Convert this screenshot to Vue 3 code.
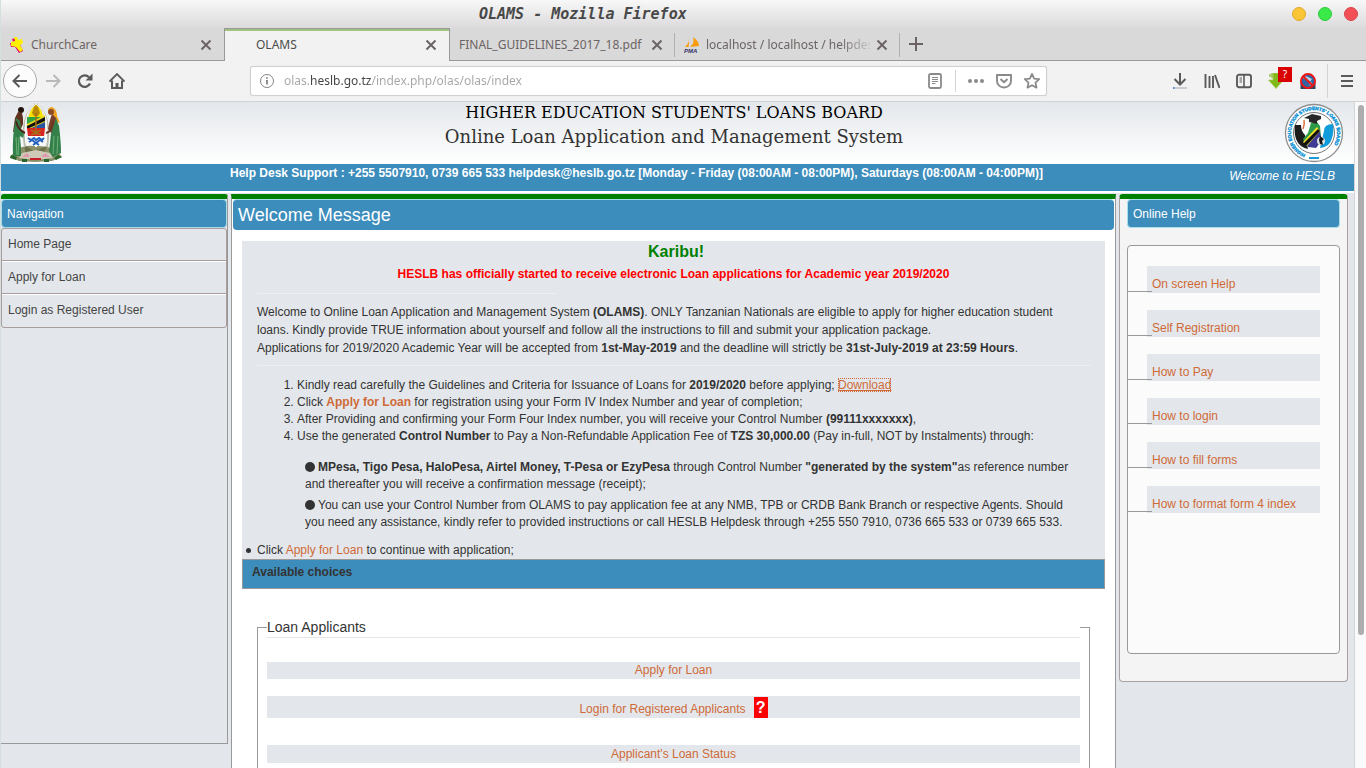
<script setup>
const navItems = ['Home Page', 'Apply for Loan', 'Login as Registered User']
const helpItems = ['On screen Help', 'Self Registration', 'How to Pay', 'How to login', 'How to fill forms', 'How to format form 4 index']
const address = 'olas.heslb.go.tz/index.php/olas/olas/index'
</script>

<template>
  <div class="window">
    <header class="titlebar">
      <span class="window-title">OLAMS - Mozilla Firefox</span>
      <div class="window-buttons">
        <button class="dot amber" aria-label="Minimise"></button>
        <button class="dot green" aria-label="Maximise"></button>
        <button class="dot red" aria-label="Close window"></button>
      </div>
    </header>

    <div class="tabs">
      <div class="tab first">
        <svg class="favicon" viewBox="0 0 16 16" aria-hidden="true">
          <path d="M3 2l4-1 1 5 3 1 3 7-4 2-4-6-4 0-1-4 3-1z" fill="#e5006d" />
          <path d="M5 0h3l1 3 4-1 1 4-3 2 3 5-3 2-4-5-5-1 0-4 4-1z" fill="#fff200" />
        </svg>
        <button class="tab-label">ChurchCare</button>
        <button class="tab-close" aria-label="Close ChurchCare"><svg viewBox="0 0 12 12"><path d="M1.5 1.5l9 9M10.5 1.5l-9 9" /></svg></button>
      </div>
      <div class="tab active">
        <span class="favicon"></span>
        <button class="tab-label">OLAMS</button>
        <button class="tab-close" aria-label="Close OLAMS"><svg viewBox="0 0 12 12"><path d="M1.5 1.5l9 9M10.5 1.5l-9 9" /></svg></button>
      </div>
      <div class="tab divided">
        <button class="tab-label">FINAL_GUIDELINES_2017_18.pdf</button>
        <button class="tab-close" aria-label="Close PDF"><svg viewBox="0 0 12 12"><path d="M1.5 1.5l9 9M10.5 1.5l-9 9" /></svg></button>
      </div>
      <div class="tab divided">
        <svg class="favicon" viewBox="0 0 16 16" aria-hidden="true">
          <path d="M5 1Q5 7 1 10h4zM6 10Q11 6 9 0q6 4 6 9z" fill="#f89c0e" />
          <path d="M5 10q1-3 0-8" stroke="#d9d9d9" fill="none" />
          <text x="0" y="16" font-family="Liberation Sans" font-size="6" font-weight="bold" font-style="italic" fill="#333366">PMA</text>
        </svg>
        <button class="tab-label fade">localhost / localhost / helpdes</button>
        <button class="tab-close" aria-label="Close localhost"><svg viewBox="0 0 12 12"><path d="M1.5 1.5l9 9M10.5 1.5l-9 9" /></svg></button>
      </div>
      <button class="new-tab" aria-label="New tab"><svg viewBox="0 0 14 14"><path d="M7 0v14M0 7h14" /></svg></button>
    </div>

    <div class="toolbar">
      <button class="tool back" aria-label="Back"><svg viewBox="0 0 16 16"><path d="M15 8H1.5M7.500 2L1.500 8l6 6" /></svg></button>
      <button class="tool pale" aria-label="Forward"><svg viewBox="0 0 16 16"><path d="M1 8h13.500M8.500 2l6 6-6 6" /></svg></button>
      <button class="tool" aria-label="Reload"><svg viewBox="0 0 16 16"><path d="M13 10.500A5.800 5.800 0 1 1 12 4.200" stroke-width="2.200" /><path d="M15.500 0.500v7h-7z" fill="#5a5a5a" stroke="none" /></svg></button>
      <button class="tool" aria-label="Home"><svg viewBox="0 0 16 16"><path d="M0.500 8.500L8 1l7.500 7.500" stroke-width="1.800" /><path d="M3 7.500V15h10V7.500" /><path d="M6.500 15v-5h3v5z" fill="#5a5a5a" stroke="none" /></svg></button>

      <div class="urlbar">
        <svg class="info" viewBox="0 0 16 16"><circle cx="8" cy="8" r="6.500" /><path d="M8 7v4.500M8 4.300v1.500" stroke-width="1.800" /></svg>
        <input class="address" type="text" aria-label="Address" :value="address" spellcheck="false" />
        <button class="url-btn" aria-label="Reader view"><svg viewBox="0 0 16 16"><rect x="2" y="1" width="12" height="14" rx="1.500" stroke-width="1.800" /><path d="M5 4.500h6M5 6.500h6M5 8.500h6M5 10.500h3.500" stroke-width="1" /></svg></button>
        <span class="url-sep"></span>
        <button class="url-btn" aria-label="Page actions"><svg viewBox="0 0 16 16"><g fill="#8a8a8a" stroke="none"><circle cx="2" cy="8" r="2" /><circle cx="8" cy="8" r="2" /><circle cx="14" cy="8" r="2" /></g></svg></button>
        <button class="url-btn" aria-label="Pocket"><svg viewBox="0 0 16 16"><path d="M1 2h14v6a7 6.500 0 0 1-14 0zM4.500 6L8 9.300 11.500 6" stroke-width="1.900" stroke-linejoin="round" /></svg></button>
        <button class="url-btn" aria-label="Bookmark"><svg viewBox="0 0 16 16"><path d="M8 1l2.200 4.600 5 .6-3.700 3.400 1 5L8 12.200l-4.500 2.400 1-5L.8 6.200l5-.6z" stroke-width="1.800" stroke-linejoin="round" /></svg></button>
      </div>

      <button class="tool" aria-label="Downloads"><svg viewBox="0 0 16 16"><path d="M8 0v11M2.500 6L8 11.500 13.500 6" /><path d="M1 15h14" stroke="#c9ccd0" /><path d="M1 15h1.500" stroke="#4a90d9" /></svg></button>
      <button class="tool" aria-label="Library"><svg viewBox="0 0 16 16"><path d="M1.500 1v14M5.500 3v12M9 3v12M11 2l4.500 13" stroke-width="1.900" /></svg></button>
      <button class="tool" aria-label="Sidebars"><svg viewBox="0 0 16 16"><rect x="1" y="1.800" width="14" height="12.400" rx="2" stroke-width="1.900" /><path d="M8 2v12" stroke-width="1.600" /><path d="M3.500 5H6M3.500 7H6M3.500 9H6" stroke-width="1" /></svg></button>
      <button class="tool badge-tool" aria-label="Download helper">
        <svg viewBox="0 0 16 16"><path d="M5 0h6v7h4.500L8 15.500 0.500 7H5z" fill="#83b81a" stroke="#a5cf55" stroke-width=".8" /><path d="M2 1v3M4 0v5" stroke="#83b81a" stroke-width="1.200" /></svg>
        <span class="badge">?</span>
      </button>
      <button class="tool" aria-label="Proxy off"><svg viewBox="0 0 16 16"><rect x="0.500" y="8" width="15" height="8" fill="#33445e" stroke="none" /><circle cx="8" cy="8" r="6.500" fill="#2f66a3" stroke="none" /><path d="M3 5q3-3 5-1l4 2-2 3zM9 10l3-1-2 4z" fill="#b4cfe4" stroke="none" /><circle cx="8" cy="8" r="7" stroke="#f01414" stroke-width="1.900" /><path d="M3 3l10 10" stroke="#f01414" stroke-width="1.900" /></svg></button>
      <span class="tool-sep"></span>
      <button class="tool" aria-label="Menu"><svg viewBox="0 0 16 16"><path d="M2 3h12M2 8h12M2 13h12" /></svg></button>
    </div>

    <div class="viewport">
      <div class="page">
        <div class="masthead">
          <svg class="arms" viewBox="0 0 56 60" role="img" aria-label="Coat of arms of Tanzania">
            <path d="M7 48q7-6 20-5 15-1 23 6l4 5-10 4-17 1-16-1-9-4z" fill="#8b9068" />
            <path d="M16 42l10 6 13-5-6 13H19z" fill="#6b704a" />
            <path d="M14 50l14-3 14 3 3 5-17 2-17-2z" fill="#cfc9ba" />
            <path d="M14 54l5-4 3 4zM33 54l4-4 5 4z" fill="#dd9aaa" />
            <path d="M22 55h11v2H22z" fill="#c81e2a" />
            <path d="M3 52l6 2-1 3-6-2zM50 52l4 2-6 3-2-2zM14 56h5v3h-5zM36 56h5v3h-5z" fill="#28662b" />
            <path d="M17 44Q12 14 27 1M39 44Q44 14 29 1" fill="none" stroke="#bcbcaa" stroke-width="2" />
            <path d="M18 40Q14 12 26 1M38 40Q42 12 30 1" fill="none" stroke="#fff" stroke-width="1" />
            <path d="M28 1q-9 6-9 24 1 13 9 19 8-6 9-19 0-18-9-24z" fill="#f8e000" stroke="#e8e8d8" />
            <path d="M26 4l2-2 2 2 2 6-2 3h-4l-2-3z" fill="#bb8909" />
            <path d="M19 14h18v11H19z" fill="#2856a5" />
            <path d="M19 14h18L19 24z" fill="#2ea343" />
            <path d="M19 21l18-9v7l-18 8z" fill="#e9d51f" />
            <path d="M19 23l18-9v4l-18 8z" fill="#101010" />
            <path d="M19 25h18l-1 8H20z" fill="#da2424" />
            <path d="M23 32l10-5M33 32L23 27M28 10v22" stroke="#a56f18" stroke-width="1.500" />
            <path d="M20 33h16q-2 8-8 11-6-3-8-11z" fill="#fff" />
            <path d="M20 35l3 2 3-2 2 2 3-2 3 2 2-2M21 39l3-2 4 3 4-3 3 2M25 42l3-2 3 2" fill="none" stroke="#2463bd" stroke-width="2" />
            <path d="M10 9l4 1 1 5 0 6-3 7-7 1 2-14z" fill="#5f311f" />
            <circle cx="13" cy="7" r="3" fill="#24130d" />
            <path d="M8 15l4 3 1 8 3 5-1 4-3-2 1 12 0 8H5Q4 32 8 15z" fill="#34804b" />
            <path d="M8 18q2 9 9 12" fill="none" stroke="#4b271a" stroke-width="2" />
            <path d="M8 34l1 18M11 34l-1 18" stroke="#6db078" />
            <path d="M40 8q0-4 4-4 5 2 5 9l3 7-5-2-3-7z" fill="#efa426" />
            <path d="M44 11l4 4 2 12-6 4-4-5 2-9z" fill="#79402b" />
            <circle cx="43" cy="9" r="3" fill="#8c4b27" />
            <path d="M48 15l3 8q2 16 2 27l-8 4-4-6 2-17z" fill="#34804b" />
            <path d="M45 18q-1 11-7 12" fill="none" stroke="#6a3422" stroke-width="2" />
            <path d="M46 33l-1 18M50 33l-1 18" stroke="#6db078" />
          </svg>
          <div class="titles">
            <h1>HIGHER EDUCATION STUDENTS' LOANS BOARD</h1>
            <h2>Online Loan Application and Management System</h2>
          </div>
          <svg class="seal" viewBox="0 0 60 60" role="img" aria-label="Higher Education Students' Loans Board">
            <defs><path id="sealRing" d="M21.500 51.400A23 23 0 1 1 38.500 51.400" /></defs>
            <circle cx="30" cy="30" r="28.500" fill="#fff" stroke="#8d8d8d" stroke-width="1.300" />
            <circle cx="30" cy="30" r="20.500" fill="#fff" stroke="#777" stroke-width="1" />
            <text font-family="Liberation Sans" font-weight="bold" font-size="4.700" fill="#1093d6" stroke="#1093d6" stroke-width=".4"><textPath href="#sealRing">HIGHER EDUCATION STUDENTS' LOANS BOARD</textPath></text>
            <path d="M25 55h10" stroke="#1a99db" stroke-width="2" />
            <path d="M11 22h6q0 6 4 10l3 14q-9-2-12-10-2-6-1-14z" fill="#1d1d1d" />
            <path d="M49 21q-9 0-9 7l-4 17q10-1 12-10 2-6 1-14z" fill="#109bdb" />
            <path d="M27 20l6-1 3 4 1 11-5 10-10-1-3-7 5-6z" fill="#2b9a4a" />
            <path d="M20 38l15-11 3 10-6 8-8-1z" fill="#3f3b94" />
            <path d="M19 39l14-15 3 4-13 15z" fill="#f4e225" />
            <path d="M19 41l15-15 2 2-14 15z" fill="#111" />
            <path d="M20 15l8-4 9 2 0 3-4 2v3l-8-2v-3z" fill="#282828" />
            <path d="M20 17q1 4-1 9" fill="none" stroke="#d67241" stroke-width="1.500" />
            <circle cx="37" cy="38" r="4" fill="#d9dfe3" />
            <path d="M36 33l4 3-2 2 1 4-3-1-1-4z" fill="#171717" />
          </svg>
        </div>

        <div class="support">
          <strong>Help Desk Support : +255 5507910, 0739 665 533 helpdesk@heslb.go.tz [Monday - Friday (08:00AM - 08:00PM), Saturdays (08:00AM - 04:00PM)]</strong>
          <em>Welcome to HESLB</em>
        </div>

        <div class="columns">
          <aside class="side">
            <h3 class="bar">Navigation</h3>
            <nav>
              <a v-for="item in navItems" :key="item" href="#">{{ item }}</a>
            </nav>
          </aside>

          <main class="content">
            <h3 class="bar large">Welcome Message</h3>
            <div class="welcome">
              <h4>Karibu!</h4>
              <p class="notice">HESLB has officially started to receive electronic Loan applications for Academic year 2019/2020</p>
              <hr class="short" />
              <p class="intro">Welcome to Online Loan Application and Management System <b>(OLAMS)</b>. ONLY Tanzanian Nationals are eligible to apply for higher education student loans. Kindly provide TRUE information about yourself and follow all the instructions to fill and submit your application package.<br />Applications for 2019/2020 Academic Year will be accepted from <b>1st-May-2019</b> and the deadline will strictly be <b>31st-July-2019 at 23:59 Hours</b>.</p>
              <hr />
              <ol>
                <li>Kindly read carefully the Guidelines and Criteria for Issuance of Loans for <b>2019/2020</b> before applying; <a class="download" href="#">Download</a></li>
                <li>Click <a href="#"><b>Apply for Loan</b></a> for registration using your Form IV Index Number and year of completion;</li>
                <li>After Providing and confirming your Form Four Index number, you will receive your Control Number <b>(99111xxxxxxx)</b>,</li>
                <li>Use the generated <b>Control Number</b> to Pay a Non-Refundable Application Fee of <b>TZS 30,000.00</b> (Pay in-full, NOT by Instalments) through:</li>
              </ol>
              <div class="methods">
                <p><i class="disc"></i><b>MPesa, Tigo Pesa, HaloPesa, Airtel Money, T-Pesa or EzyPesa</b> through Control Number <b>"generated by the system"</b>as reference number and thereafter you will receive a confirmation message (receipt);</p>
                <p><i class="disc"></i>You can use your Control Number from OLAMS to pay application fee at any NMB, TPB or CRDB Bank Branch or respective Agents. Should you need any assistance, kindly refer to provided instructions or call HESLB Helpdesk through +255 550 7910, 0736 665 533 or 0739 665 533.</p>
              </div>
              <ul>
                <li>Click <a href="#">Apply for Loan</a> to continue with application;</li>
              </ul>
            </div>
            <div class="choices">Available choices</div>
            <fieldset>
              <legend>Loan Applicants</legend>
              <div class="choice"><a href="#">Apply for Loan</a></div>
              <div class="choice tall"><a href="#">Login for Registered Applicants</a><button class="hint" aria-label="Login help">?</button></div>
              <div class="choice last"><a href="#">Applicant's Loan Status</a></div>
            </fieldset>
          </main>

          <aside class="help">
            <h3 class="bar">Online Help</h3>
            <ul class="help-list">
              <li v-for="item in helpItems" :key="item"><a href="#">{{ item }}</a></li>
            </ul>
          </aside>
        </div>
      </div>
      <div class="scrollbar"><div class="thumb"></div></div>
    </div>
  </div>
</template>

<style>
body { background: #e3e7eb; overflow: hidden; }
</style>

<style scoped>
* { box-sizing: border-box; }
button { border: 0; padding: 0; background: none; font: inherit; color: inherit; }
h1, h2, h3, h4, p { margin: 0; font-weight: normal; }
a { color: #cf6a38; text-decoration: none; }
.window { height: 100vh; display: flex; flex-direction: column; overflow: hidden; border-left: 1px solid #d6dfdf; font-family: "Noto Sans", sans-serif; font-size: 12px; color: #4c4c4c; }
.titlebar { flex: none; height: 28px; background: linear-gradient(#f8f8f8, #dcdadc); display: flex; align-items: center; }
.window-title { margin-left: 478px; font: italic bold 15px "DejaVu Sans Mono", monospace; color: #484848; white-space: pre; }
.window-buttons { margin-left: auto; margin-right: 8px; display: flex; gap: 12px; }
.dot { width: 14px; height: 14px; border-radius: 50%; }
.amber { background: #fac536; border: 1px solid #dfaa2c; }
.green { background: #39ea49; border: 1px solid #2fc93f; }
.red { background: #f25056; border: 1px solid #d94449; }

.tabs { flex: none; height: 33px; display: flex; background: #d9d9d9; box-shadow: inset 0 -1px #999; }
.tab { width: 225px; display: flex; align-items: center; padding: 0 12px 0 9px; color: #6c6464; position: relative; }
.tab.first { width: 223px; padding-left: 8px; }
.tab.active { width: 226px; background: #f2f2f2; border: 1px solid #999; border-bottom: 0; box-shadow: inset 0 2px #9fc37e; color: #4c4c4c; }
.tab.divided::after { content: ""; position: absolute; right: 0; top: 5px; height: 24px; width: 1px; background: #b0b0b0; }
.favicon { flex: none; width: 16px; height: 16px; margin-right: 6px; }
.tab-label { flex: 1; min-width: 0; overflow: hidden; white-space: nowrap; text-align: left; line-height: 20px; }
.fade { mask-image: linear-gradient(90deg, #000 134px, transparent 168px); }
.tab-close { flex: none; width: 12px; height: 12px; margin-left: 6px; }
.tab-close svg, .new-tab svg { display: block; width: 100%; height: 100%; stroke: #6c6464; stroke-width: 2; fill: none; }
.new-tab { width: 14px; height: 14px; margin: 9px 0 0 9px; }

.toolbar { flex: none; height: 41px; display: flex; align-items: center; padding: 0 3px; background: #f2f2f2; border-bottom: 1px solid #d2d2d6; }
.tool { flex: none; width: 32px; height: 32px; display: grid; place-items: center; position: relative; }
.tool svg { width: 16px; height: 16px; fill: none; stroke: #5a5a5a; stroke-width: 2; }
.back { width: 34px; height: 34px; margin-left: -1px; border: 1px solid #a8a8a8; border-radius: 50%; background: #fcfcfc; }
.pale svg { stroke: #b9b9b9; }
.badge-tool .badge { position: absolute; left: 18px; top: 2px; width: 14px; height: 15px; background: #d90000; color: #fff; font-size: 10px; line-height: 14px; text-align: center; }
.tool-sep { width: 1px; height: 34px; margin: 0 3px; background: #d2d2d2; }
.urlbar { flex: 1; height: 30px; margin: 0 117px; display: flex; align-items: center; background: #fff; border: 1px solid #d0d0d0; border-radius: 3px; padding: 0 0 0 8px; box-shadow: 0 0 1px #ccc; }
.info { flex: none; width: 16px; height: 16px; fill: none; stroke: #858585; stroke-width: 1; }
.address { flex: 1; min-width: 0; margin-left: 9px; border: 0; outline: 0; padding: 0; height: 20px; font: 12px/20px "Noto Sans", sans-serif; color: transparent; background: linear-gradient(90deg, #a5a5a5 26px, #424242 26px, #424242 88px, #a5a5a5 88px); background-clip: text; -webkit-background-clip: text; }
.url-btn { width: 28px; height: 24px; display: grid; place-items: center; }
.url-btn svg { width: 16px; height: 16px; fill: none; stroke: #8a8a8a; }
.url-sep { width: 1px; height: 22px; margin: 0 6px; background: #d5d5d5; }

.viewport { flex: 1; min-height: 0; display: flex; background: #e3e7eb; }
.page { flex: 1; min-width: 0; overflow: hidden; font-family: "Liberation Sans", Arial, sans-serif; font-size: 12px; line-height: 17px; color: #333; }
.masthead { display: flex; height: 62px; padding: 1px 10px 0 7px; background: linear-gradient(#e3e7eb, #fff); }
.arms { width: 56px; height: 60px; }
.seal { width: 60px; height: 60px; }
.titles { flex: 1; padding-top: 1px; text-align: center; font-family: "DejaVu Serif", serif; }
.titles h1 { font-size: 16px; line-height: 18px; color: #000; }
.titles h2 { font-size: 18px; line-height: 30px; color: #333; }
.support { display: flex; justify-content: space-between; height: 27px; padding: 0 19px 0 229px; background: #3c8dbc; color: #fff; line-height: 18px; }
.support em { padding-top: 3px; }
.columns { display: flex; align-items: flex-start; gap: 3px; border-top: 2px solid #fff; padding: 1px 6px 0 0; }
.side, .content, .help { border-top: 5px solid #008000; }
.side { width: 227px; height: 550px; border-right: 1px solid #999; border-bottom: 1px solid #999; border-radius: 3px 3px 0 0; }
.bar { height: 29px; padding: 0 5px; border: 1px solid #a8ddea; border-radius: 4px; background: #3c8dbc; color: #fff; font-size: 12px; line-height: 28px; }
.large { height: 31px; border: 0; border-top: 1px solid #a8ddea; font-size: 18px; line-height: 30px; margin: 0 1px; }
.side nav { border: 1px solid #a99c9c; border-radius: 3px; }
.side nav a { display: block; height: 33px; padding-left: 6px; border-bottom: 1px solid #a99c9c; border-top: 1px solid #fff; line-height: 30px; color: #444; }
.side nav a:first-child { height: 32px; border-top: 0; }
.side nav a:last-child { border-bottom: 0; }
.content { flex: 1; min-width: 0; background: #fff; border-left: 1px solid #999; border-right: 1px solid #999; padding-bottom: 20px; }
.welcome { margin: 11px 10px 0; padding: 1px 15px 0; background: #e3e7eb; height: 318px; }
.welcome h4 { padding-left: 5px; color: #008000; font-size: 16px; font-weight: bold; line-height: 20px; text-align: center; }
.notice { color: #f00; font-weight: bold; line-height: 24px; text-align: center; }
hr { margin: 0; height: 1px; border: 0; background: #eef0f2; }
.short { width: 300px; margin-top: 7px; }
.intro { padding: 9px 10px 8px 0; line-height: 18px; }
ol { margin: 11px 0 0; padding-left: 40px; }
.methods { margin: 14px 10px 0 48px; }
.methods p { margin-bottom: 4px; }
.methods p:last-child { margin-bottom: 0; }
.disc { display: inline-block; width: 10px; height: 10px; border-radius: 50%; background: #333; margin-right: 3px; vertical-align: -1px; }
.welcome ul { margin: 11px 0 0; padding: 0; list-style: none; }
.welcome ul li { position: relative; }
.welcome ul li::before { content: ""; position: absolute; left: -11px; top: 6px; width: 5px; height: 5px; border-radius: 50%; background: #333; }
.download { outline: 1px dotted #cf6a38; outline-offset: -1px; text-decoration: underline; }
.choices { margin: 0 10px; height: 30px; padding: 4px 9px; border: 1px solid #999; background: #3c8dbc; font-weight: bold; }
fieldset { min-width: 0; margin: 28px 25px 0; padding: 0 9px 10px; border: 1px solid #999; }
legend { width: 100%; padding: 0; border-bottom: 1px solid #e5e5e5; margin-bottom: 24px; font-size: 14px; line-height: 20px; }
.choice { display: flex; justify-content: center; align-items: center; gap: 8px; margin-bottom: 17px; background: #e3e7eb; }
.tall { height: 22px; margin-bottom: 27px; }
.tall a { padding-top: 4px; }
.last { height: 18px; }
.hint { width: 14px; height: 21px; background: #f00; color: #fff; font-size: 16px; font-weight: bold; line-height: 21px; }
.help { width: 229px; height: 488px; padding: 0 7px; background: #f4f4f4; border-left: 1px solid #aaa0a0; border-right: 1px solid #aaa0a0; border-bottom: 1px solid #aaa0a0; border-radius: 4px; }
.help-list { height: 409px; margin: 17px 0 0; padding: 20px 19px 0; list-style: none; background: #fbfbfb; border: 1px solid #999; border-radius: 4px; }
.help-list li { position: relative; height: 27px; margin-bottom: 17px; padding: 10px 0 0 5px; background: #e3e7eb; }
.help-list li::before { content: ""; position: absolute; left: -19px; top: 25px; width: 24px; height: 1px; background: #999; }
.scrollbar { width: 12px; background: #fafafa; border-left: 1px solid #d5d5d8; padding: 3px 2px 0; }
.thumb { height: 80%; width: 6px; margin-left: 1px; background: #adadad; border-radius: 3px; }
</style>
